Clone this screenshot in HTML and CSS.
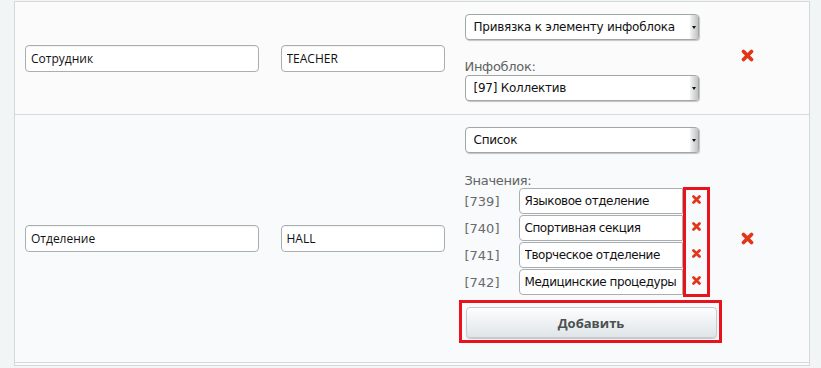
FILE: index.html
```html
<!DOCTYPE html>
<html lang="ru">
<head>
    <meta charset="UTF-8">
    <meta name="viewport" content="width=device-width, initial-scale=1.0">
    <title>Свойства</title>
    <link rel="stylesheet" href="styles.css">
</head>
<body>
    <table class="props">
        <colgroup>
            <col class="col-name">
            <col class="col-code">
            <col class="col-type">
            <col class="col-del">
        </colgroup>
        <tbody>
            <!-- Свойство: привязка к элементу -->
            <tr class="row-a">
                <td class="cell"><input class="field field-name" type="text" value="Сотрудник"></td>
                <td class="cell"><input class="field field-code" type="text" value="TEACHER"></td>
                <td class="cell cell-type">
                    <div class="select">
                        <select>
                            <option>Привязка к элементу инфоблока</option>
                        </select>
                    </div>
                    <div class="label label-iblock">Инфоблок:</div>
                    <div class="select select-second">
                        <select>
                            <option>[97] Коллектив</option>
                        </select>
                    </div>
                </td>
                <td class="cell cell-del cell-del-top">
                    <svg class="del-big" width="15" height="15" viewBox="0 0 15 15"><path d="M3.5 3.5 L11.5 11.5 M11.5 3.5 L3.5 11.5"/></svg>
                </td>
            </tr>

            <!-- Свойство: список -->
            <tr class="row-b">
                <td class="cell"><input class="field field-name" type="text" value="Отделение"></td>
                <td class="cell"><input class="field field-code" type="text" value="HALL"></td>
                <td class="cell cell-type cell-list">
                    <div class="select">
                        <select>
                            <option>Список</option>
                        </select>
                    </div>
                    <div class="label label-values">Значения:</div>
                    <div class="values">
                        <div class="value-rows">
                            <div class="value-row"><span class="val-id">[739]</span><input class="val" type="text" value="Языковое отделение"></div>
                            <div class="value-row"><span class="val-id">[740]</span><input class="val" type="text" value="Спортивная секция"></div>
                            <div class="value-row"><span class="val-id">[741]</span><input class="val" type="text" value="Творческое отделение"></div>
                            <div class="value-row"><span class="val-id">[742]</span><input class="val" type="text" value="Медицинские процедуры"></div>
                        </div>
                        <div class="remove-box">
                            <svg class="del-small" width="11" height="11" viewBox="0 0 11 11"><path d="M2.5 2.5 L8.5 8.5 M8.5 2.5 L2.5 8.5"/></svg>
                            <svg class="del-small" width="11" height="11" viewBox="0 0 11 11"><path d="M2.5 2.5 L8.5 8.5 M8.5 2.5 L2.5 8.5"/></svg>
                            <svg class="del-small" width="11" height="11" viewBox="0 0 11 11"><path d="M2.5 2.5 L8.5 8.5 M8.5 2.5 L2.5 8.5"/></svg>
                            <svg class="del-small" width="11" height="11" viewBox="0 0 11 11"><path d="M2.5 2.5 L8.5 8.5 M8.5 2.5 L2.5 8.5"/></svg>
                        </div>
                    </div>
                    <div class="add-box">
                        <button class="add-btn" type="button">Добавить</button>
                    </div>
                </td>
                <td class="cell cell-del">
                    <svg class="del-big" width="15" height="15" viewBox="0 0 15 15"><path d="M3.5 3.5 L11.5 11.5 M11.5 3.5 L3.5 11.5"/></svg>
                </td>
            </tr>

            <tr class="row-c">
                <td class="cell"></td>
                <td class="cell"></td>
                <td class="cell"></td>
                <td class="cell"></td>
            </tr>
        </tbody>
    </table>
</body>
</html>
```

FILE: styles.css
```css
body {
    margin: 0;
    background: #f1f5f6;
    font-family: "DejaVu Sans", sans-serif;
    font-size: 12px;
    color: #222;
}
.props {
    margin: 1px 0 0 14px;
    width: 795px;
    border-collapse: collapse;
    table-layout: fixed;
    border: 1px solid #d3d8d8;
}
.col-name { width: 256px; }
.col-code { width: 184px; }
.col-type { width: 265px; }
.col-del { width: 90px; }
.props td {
    border-top: 1px solid #d6dadb;
    padding: 0 0 0 10px;
    vertical-align: middle;
}
.row-a { background: #fafbfa; }
.row-b { background: #f8fafb; }
.row-c { background: #fafbfb; height: 3px; }

.field {
    box-sizing: border-box;
    display: block;
    height: 27px;
    padding: 0 5px;
    border: 1px solid #a9afb1;
    border-radius: 4px;
    background: #fff;
    box-shadow: inset 0 1px 1px rgba(0,0,0,0.05);
    font-family: "Open Sans", sans-serif;
    font-size: 12px;
    color: #111;
}
.field-name { width: 234px; }
.field-code { width: 164px; }

.props td.cell-type {
    padding: 12px 0 13px 10px;
    vertical-align: top;
}

.select {
    position: relative;
    width: 234px;
    height: 26px;
}
.select select {
    -webkit-appearance: none;
    appearance: none;
    box-sizing: border-box;
    width: 100%;
    height: 26px;
    padding: 0 0 0 8px;
    border: 1px solid #a1a6a8;
    border-radius: 4px;
    background: #fff;
    box-shadow: 1px 1px 1px rgba(0,0,0,0.22);
    font-family: "DejaVu Sans", sans-serif;
    font-size: 12px;
    letter-spacing: -0.25px;
    color: #111;
}
.select::after {
    content: "";
    position: absolute;
    top: 1px;
    right: 1px;
    bottom: 1px;
    width: 8px;
    border-radius: 0 3px 3px 0;
    background: linear-gradient(to right, #f4f4f4, #bfc1c2);
    pointer-events: none;
}
.select::before {
    content: "";
    position: absolute;
    top: 12px;
    right: 3px;
    z-index: 1;
    border-left: 2.5px solid transparent;
    border-right: 2.5px solid transparent;
    border-top: 3px solid #111;
    pointer-events: none;
}
.label {
    color: #5f6466;
    font-size: 13px;
    letter-spacing: -0.3px;
    line-height: 15px;
}
.label-iblock { margin: 19px 0 1px; }
.label-values { margin: 20px 0 0; }

.values {
    display: flex;
    align-items: flex-start;
}
.value-row {
    display: flex;
    align-items: center;
    height: 26px;
    margin-bottom: 1px;
}
.val-id {
    width: 54px;
    color: #666a6c;
    font-size: 13px;
}
.val {
    box-sizing: border-box;
    width: 164px;
    height: 26px;
    padding: 0 3px 0 5px;
    border: 1px solid #a9afb1;
    border-radius: 4px 0 0 4px;
    background: #fff;
    font-family: "DejaVu Sans", sans-serif;
    font-size: 12px;
    letter-spacing: -0.45px;
    color: #111;
}
.remove-box {
    box-sizing: border-box;
    display: flex;
    flex-direction: column;
    align-items: center;
    gap: 16px;
    width: 27px;
    height: 110px;
    margin-top: -1px;
    padding-top: 4px;
    border: 3px solid #e8131b;
}
.add-box {
    box-sizing: border-box;
    width: 263px;
    height: 43px;
    margin: 3px 0 6px -6px;
    padding: 4px 2px 2px 4px;
    border: 3px solid #e8131b;
}
.add-btn {
    display: block;
    width: 251px;
    height: 31px;
    border: 1px solid #c4cacd;
    border-radius: 4px;
    background: linear-gradient(#fdfefe, #dfe5e8);
    box-shadow: 0 1px 1px rgba(0,0,0,0.2);
    font-family: "Open Sans", sans-serif;
    font-size: 13px;
    font-weight: bold;
    color: #4b5053;
    cursor: pointer;
}
.props td.cell-del { padding-left: 20px; }
.props td.cell-del-top { padding-bottom: 6px; }
.del-big, .del-small {
    display: block;
    fill: none;
    stroke: #e2361b;
    stroke-linecap: round;
}
.del-big { stroke-width: 3.8; }
.del-small { stroke-width: 2.8; }
```
